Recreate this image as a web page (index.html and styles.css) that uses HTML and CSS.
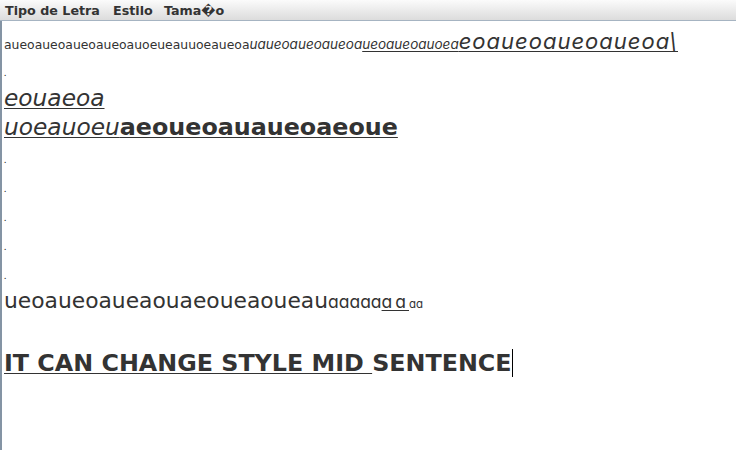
FILE: index.html
```html
<!DOCTYPE html>
<html>
<head>
<meta charset="utf-8">
<link rel="stylesheet" href="styles.css">
</head>
<body>
<div class="menubar">
  <span class="menu m1">Tipo de Letra</span>
  <span class="menu m2">Estilo</span>
  <span class="menu m3">Tama&#xFFFD;o</span>
</div>
<div class="editor">
  <div class="line l1"><span class="dv s12">aueoaueoaueoaueoauoeueauuoeaueoa</span><span class="in it s13">uaueoaueoaueoa</span><span class="in it s13 ul">ueoaueoauoea</span><span class="in it s22 ul">eoaueoaueoaueoa\</span></div>
  <div class="line dot"><span class="tiny">.</span></div>
  <div class="line l3"><span class="dv it s23i ul">eouaeoa</span></div>
  <div class="line l4"><span class="dv it s23i ul">uoeauoeu</span><span class="dv bd s23 ul">aeoueoauaueoaeoue</span></div>
  <div class="line dot"><span class="tiny">.</span></div>
  <div class="line dot"><span class="tiny">.</span></div>
  <div class="line dot"><span class="tiny">.</span></div>
  <div class="line dot"><span class="tiny">.</span></div>
  <div class="line dot"><span class="tiny">.</span></div>
  <div class="line l10"><span class="dv s21">ueoaueoaueaouaeoueaoueau</span><span class="in s17">aaaaa</span><span class="in s17 wide ul">aa</span><span class="in s11">aa</span></div>
  <div class="line empty"></div>
  <div class="line l12"><span class="dv bd s23 ul">IT CAN CHANGE STYLE MID </span><span class="dv bd s23">SENTENCE</span><span class="caret"></span></div>
</div>
</body>
</html>
```

FILE: styles.css
```css
html, body {
  margin: 0;
  padding: 0;
  background: #ffffff;
}
body {
  width: 736px;
  height: 450px;
  overflow: hidden;
  font-family: "DejaVu Sans", sans-serif;
  color: #333333;
}
.menubar {
  height: 20px;
  border-bottom: 1px solid #a6b4c2;
  background: linear-gradient(#fbfbfb, #dcdcdc);
  display: flex;
  align-items: center;
  padding-left: 5px;
  font-family: "DejaVu Sans", sans-serif;
  font-weight: bold;
  font-size: 12.7px;
  color: #333333;
}
.menu { white-space: nowrap; }
.m1 { width: 108px; }
.m2 { width: 51px; }
.editor {
  height: 429px;
  border-left: 2px solid #8494a4;
  padding-left: 2px;
  background: #ffffff;
}
.line {
  height: 29px;
  line-height: 29px;
  white-space: nowrap;
}
.l1 { height: 27px; padding-top: 6px; }
.dot { height: 27px; padding-top: 2px; }
.dv { font-family: "DejaVu Sans", sans-serif; }
.in { font-family: "Inter", sans-serif; font-feature-settings: "cv11" 1; }
.it { font-style: italic; }
.bd { font-weight: bold; }
.ul { text-decoration: underline; text-decoration-thickness: 1px; text-underline-offset: 2px; }
.s11 { font-size: 11.5px; }
.s12 { font-size: 12.4px; }
.s13 { font-size: 13.5px; }
.s17 { font-size: 17.5px; }
.wide { letter-spacing: 3px; }
.s22 { font-size: 22px; letter-spacing: 1px; }
.s21 { font-size: 21.8px; }
.s23 { font-size: 23.8px; }
.s23i { font-size: 23.3px; }
.tiny { font-size: 6px; font-weight: bold; }
.empty { height: 34px; }
.caret {
  display: inline-block;
  width: 1px;
  height: 28px;
  background: #000000;
  vertical-align: -6px;
}
```
